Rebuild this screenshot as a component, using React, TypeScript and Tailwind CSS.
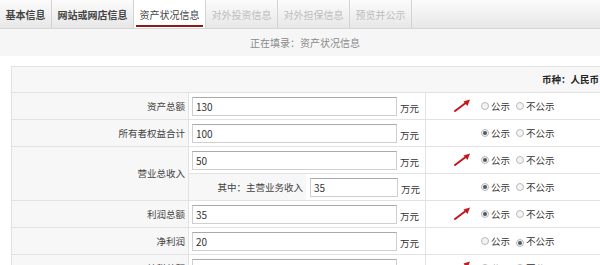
import React from "react";

const font = { fontFamily: '"Noto Sans CJK SC", "Noto Sans", sans-serif' };

const tabs = [
  { name: "基本信息", state: "done" },
  { name: "网站或网店信息", state: "done" },
  { name: "资产状况信息", state: "active" },
  { name: "对外投资信息", state: "off" },
  { name: "对外担保信息", state: "off" },
  { name: "预览并公示", state: "off" },
];

function Arrow() {
  return (
    <svg
      width="18"
      height="15"
      viewBox="0 0 18 15"
      className="absolute left-[28px] top-[5px]"
    >
      <path d="M1 13 L13 4" stroke="#c4161c" strokeWidth="2" strokeLinecap="round" />
      <path d="M16 1.5 L9.5 3.5 L13.5 8 Z" fill="#c4161c" />
    </svg>
  );
}

function Radio({ checked }: { checked?: boolean }) {
  return (
    <span className="inline-flex h-[8px] w-[8px] items-center justify-center rounded-full border border-[#b9b9b9] bg-[#f4f4f4]">
      {checked && <span className="h-[4px] w-[4px] rounded-full bg-[#4a5968]" />}
    </span>
  );
}

// show: true = 公示, false = 不公示, undefined = nothing picked yet
function Publish({ show, arrow }: { show?: boolean; arrow?: boolean }) {
  return (
    <div className="relative flex h-full flex-1 items-center pl-[55px] text-[9.5px] text-[#333]">
      {arrow && <Arrow />}
      <Radio checked={show === true} />
      <span className="ml-[2px]">公示</span>
      <span className="ml-[6px]">
        <Radio checked={show === false} />
      </span>
      <span className="ml-[2px]">不公示</span>
    </div>
  );
}

function Money({ value, width = "w-[205px]" }: { value: string; width?: string }) {
  return (
    <>
      <div
        className={`${width} h-[19px] border border-[#cfcfcf] border-t-[#a9a9a9] bg-white pl-[3px] text-[10px] leading-[17px] text-[#333]`}
      >
        {value}
      </div>
      <span className="ml-[3px] mt-[5px] text-[9.5px] text-[#333]">万元</span>
    </>
  );
}

function Row({
  label,
  value,
  show,
  arrow,
}: {
  label: string;
  value: string;
  show?: boolean;
  arrow?: boolean;
}) {
  return (
    <div className="flex h-[27px] border-b border-[#e2e2e2]">
      <div className="flex w-[177px] items-center justify-end border-r border-[#e2e2e2] bg-[#f7f7f7] pr-[3px] text-[9.5px] text-[#444]">
        {label}
      </div>
      <div className="flex w-[237px] items-center border-r border-[#e2e2e2] pl-[3px]">
        <Money value={value} />
      </div>
      <Publish show={show} arrow={arrow} />
    </div>
  );
}

export default function App() {
  return (
    <main className="h-[265px] w-[600px] overflow-hidden bg-white" style={font}>
      {/* tab strip */}
      <div className="flex h-[29px] border-b border-[#d6d6d6] bg-gradient-to-b from-[#fcfcfc] to-[#e7e7e7]">
        {tabs.map((t) => (
          <div
            key={t.name}
            className={
              "flex items-center border-r border-[#d3d3d3] px-[5.5px] text-[10px] " +
              (t.state === "active"
                ? "relative bg-white text-[#444]"
                : t.state === "done"
                ? "font-bold text-[#444]"
                : "text-[#bdbdbd]")
            }
          >
            {t.name}
            {t.state === "active" && (
              <span className="absolute bottom-[1px] left-[2px] right-[2px] h-[2px] bg-[#8e1b1b]" />
            )}
          </div>
        ))}
      </div>

      {/* status line */}
      <div className="flex h-[27px] items-center justify-center bg-[#f6f6f6] pl-[10px] text-[10px] text-[#8a8a8a]">
        正在填录：资产状况信息
      </div>

      {/* form table */}
      <div className="ml-[11px] mt-[10px] w-[600px] border-l border-t border-[#e2e2e2]">
        <div className="flex h-[26px] items-center justify-end border-b border-[#e2e2e2] bg-[#f7f7f7] pr-[12px] text-[9.5px] font-bold text-[#222]">
          币种：人民币
        </div>

        <Row label="资产总额" value="130" arrow />
        <Row label="所有者权益合计" value="100" show />

        <div className="flex border-b border-[#e2e2e2]">
          <div className="flex w-[177px] items-center justify-end border-r border-[#e2e2e2] bg-[#f7f7f7] pr-[3px] text-[9.5px] text-[#444]">
            营业总收入
          </div>
          <div className="flex flex-1 flex-col">
            <div className="flex h-[27px] border-b border-[#e2e2e2]">
              <div className="flex w-[237px] items-center border-r border-[#e2e2e2] pl-[3px]">
                <Money value="50" />
              </div>
              <Publish show arrow />
            </div>
            <div className="flex h-[26px]">
              <div className="flex w-[237px] items-center border-r border-[#e2e2e2]">
                <div className="flex h-full w-[117px] items-center justify-end bg-[#f7f7f7] pr-[3px] text-[9.5px] text-[#444]">
                  其中：主营业务收入
                </div>
                <div className="ml-[4px] flex items-center">
                  <Money value="35" width="w-[88px]" />
                </div>
              </div>
              <Publish show />
            </div>
          </div>
        </div>

        <Row label="利润总额" value="35" show arrow />
        <Row label="净利润" value="20" show={false} />
        <Row label="纳税总额" value="1" show arrow />
      </div>
    </main>
  );
}
